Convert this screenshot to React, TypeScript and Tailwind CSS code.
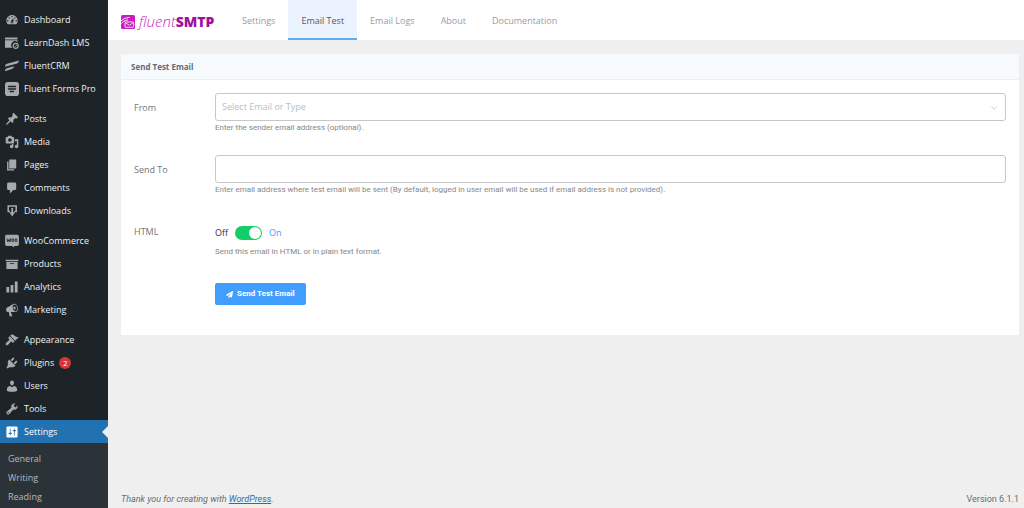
import React, { useState } from "react";
import { FaPaperPlane } from "react-icons/fa";
import { ChevronDown } from "lucide-react";
import clsx from "clsx";

interface MenuItem {
  label: string;
  icon: React.ReactNode;
  badge?: number;
}

const Glyph: React.FC<{ d: string }> = ({ d }) => (
  <svg viewBox="0 0 20 20" className="h-[14px] w-[14px]" fill="currentColor" fillRule="evenodd">
    <path d={d} />
  </svg>
);

const LearnDashIcon = () => (
  <svg viewBox="0 0 14 14" className="h-[14px] w-[14px]" fill="currentColor">
    <path d="M0 1.500h12.500v2H0zM0 4.200h12.500v2a3.600 3.600 0 0 0-5 5.500H0z" />
    <circle cx="10.700" cy="9.800" r="2.500" fill="none" stroke="currentColor" strokeWidth="1.200" />
    <path d="M9.600 9.800l.9.8 1.400-1.600" fill="none" stroke="currentColor" strokeWidth=".8" />
  </svg>
);

const FluentCrmIcon = () => (
  <svg viewBox="0 0 14 14" className="h-[14px] w-[14px]" fill="currentColor">
    <path d="M0 7.800C0 5.700 1 4.900 2.800 4.400L14 1.400C13.600 3.500 12.600 4.300 11 4.800z" />
    <path d="M0 12.200C0 10.300 1 9.500 2.600 9.100L9.200 7.300C8.800 9.100 7.700 9.900 6.200 10.300z" />
  </svg>
);

const FluentFormsIcon = () => (
  <svg viewBox="0 0 14 14" className="h-[14px] w-[14px]">
    <rect width="14" height="14" rx="2.800" fill="currentColor" />
    <path d="M3.600 4.500h6.800M3.600 7h6.800M5.300 9.500h3" stroke="#1d2327" strokeWidth="1.600" strokeLinecap="round" />
  </svg>
);

const DownloadsIcon = () => (
  <svg viewBox="0 0 14 14" className="h-[14px] w-[14px]" fill="none" stroke="currentColor">
    <path d="M5 7.500H3.200V2h8v5.500H9.400" strokeWidth="1.500" />
    <path d="M7.200 4v5" strokeWidth="1.800" />
    <path d="M4.300 8.300h5.800L7.200 12.400z" fill="currentColor" stroke="none" />
  </svg>
);

const WooIcon = () => (
  <svg viewBox="0 0 14 14" className="h-[14px] w-[14px]">
    <path d="M1.800.8h10.400c1 0 1.700.7 1.700 1.700v7.800c0 1-.7 1.700-1.700 1.700H9l.4 1.600L6.800 12h-5C.8 12 .1 11.300.1 10.300V2.500C.1 1.500.8.8 1.800.8z" fill="currentColor" />
    <path d="M2 4.400l.8 3.400L4.100 5.400l1 2.400L5.700 4.400" fill="none" stroke="#1d2327" strokeWidth=".9" />
    <ellipse cx="7.800" cy="6.200" rx="1" ry="1.500" fill="none" stroke="#1d2327" strokeWidth=".9" />
    <ellipse cx="11" cy="6.200" rx="1" ry="1.500" fill="none" stroke="#1d2327" strokeWidth=".9" />
  </svg>
);

const menuGroups: MenuItem[][] = [
  [
    {
      label: "Dashboard",
      icon: (
        <Glyph d="M3.760 16h12.480c1.100-1.370 1.760-3.110 1.760-5 0-4.420-3.580-8-8-8s-8 3.580-8 8c0 1.890.66 3.630 1.760 5zM10 4c.55 0 1 .45 1 1s-.45 1-1 1-1-.45-1-1 .45-1 1-1zM6 6c.55 0 1 .45 1 1s-.45 1-1 1-1-.45-1-1 .45-1 1-1zm8 0c.55 0 1 .45 1 1s-.45 1-1 1-1-.45-1-1 .45-1 1-1zm-5.370 5.550L12 7v6c0 1.100-.9 2-2 2s-2-.9-2-2c0-.57.24-1.080.63-1.450zM4 10c.55 0 1 .45 1 1s-.45 1-1 1-1-.45-1-1 .45-1 1-1zm12 0c.55 0 1 .45 1 1s-.45 1-1 1-1-.45-1-1 .45-1 1-1zm-5 3c0-.55-.45-1-1-1s-1 .45-1 1 .45 1 1 1 1-.45 1-1z" />
      ),
    },
    { label: "LearnDash LMS", icon: <LearnDashIcon /> },
    { label: "FluentCRM", icon: <FluentCrmIcon /> },
    { label: "Fluent Forms Pro", icon: <FluentFormsIcon /> },
  ],
  [
    {
      label: "Posts",
      icon: (
        <Glyph d="M10.440 3.020l1.820-1.820 6.360 6.350-1.830 1.820c-1.050-.68-2.480-.57-3.410.36l-.75.75c-.92.93-1.040 2.350-.35 3.410l-1.830 1.820-2.410-2.410-2.800 2.790c-.42.42-3.380 2.710-3.800 2.290s1.860-3.390 2.280-3.810l2.790-2.790L4.100 9.360l1.830-1.820c1.050.69 2.480.57 3.400-.36l.75-.75c.93-.92 1.050-2.350.36-3.410z" />
      ),
    },
    {
      label: "Media",
      icon: (
        <Glyph d="M13 11V4c0-.55-.45-1-1-1h-1.670L9 1H5L3.670 3H2c-.55 0-1 .45-1 1v7c0 .55.45 1 1 1h10c.55 0 1-.45 1-1zM7 4.500c1.380 0 2.500 1.120 2.500 2.500S8.380 9.500 7 9.500 4.500 8.380 4.500 7 5.620 4.500 7 4.500zM14 6h5v10.500c0 1.380-1.120 2.500-2.500 2.500S14 17.880 14 16.500s1.120-2.500 2.500-2.500c.17 0 .34.02.5.05V9h-3V6zm-4 8.050V13h2v3.500c0 1.380-1.120 2.500-2.500 2.500S7 17.880 7 16.500 8.120 14 9.500 14c.17 0 .34.02.5.05z" />
      ),
    },
    { label: "Pages", icon: <Glyph d="M6 15V2h10v13H6zm-1 1h8v2H3V5h2v11z" /> },
    {
      label: "Comments",
      icon: (
        <Glyph d="M5 2h9c1.100 0 2 .9 2 2v7c0 1.100-.9 2-2 2h-2l-5 5v-5H5c-1.100 0-2-.9-2-2V4c0-1.100.9-2 2-2z" />
      ),
    },
    { label: "Downloads", icon: <DownloadsIcon /> },
  ],
  [
    { label: "WooCommerce", icon: <WooIcon /> },
    { label: "Products", icon: <Glyph d="M19 4v2H1V4h18zM2 7h16v10H2V7zm11 3V9H7v1h6z" /> },
    { label: "Analytics", icon: <Glyph d="M18 18V2h-4v16h4zm-6 0V7H8v11h4zm-6 0v-8H2v8h4z" /> },
    {
      label: "Marketing",
      icon: (
        <Glyph d="M18.150 5.940c.46 1.620.38 3.220-.02 4.480-.42 1.280-1.260 2.180-2.300 2.480-.16.06-.26.06-.4.06-.06.02-.12.02-.18.02-.06.02-.14.02-.22.02h-6.800l2.220 5.500c.02.14-.06.26-.14.34-.08.1-.24.16-.34.16H6.950c-.1 0-.26-.06-.34-.16-.08-.08-.16-.2-.14-.34l-1-5.500H4.250l-.02-.02c-.5.06-1.080-.18-1.540-.62s-.88-1.080-1.060-1.880c-.24-.8-.2-1.560-.02-2.200.18-.62.58-1.080 1.060-1.300l.02-.02 9-5.400c.1-.06.18-.1.24-.16.06-.04.14-.08.24-.12.16-.08.28-.12.5-.18 1.040-.3 2.240.1 3.220.98s1.840 2.240 2.260 3.860zm-2.580 5.980h-.02c.4-.1.74-.34 1.040-.7.58-.7.86-1.760.86-3.040 0-.64-.1-1.300-.28-1.980-.34-1.360-1.020-2.500-1.780-3.240s-1.680-1.100-2.460-.88c-.82.22-1.400.96-1.700 2-.32 1.040-.28 2.360.06 3.720.38 1.360 1 2.500 1.800 3.240.78.74 1.620 1.100 2.480.88zm-2.540-7.080c.22-.04.42-.02.62.04.38.16.76.48 1.020 1s.42 1.200.42 1.780c0 .3-.04.56-.12.8-.18.48-.44.84-.86.94-.34.1-.8-.06-1.140-.4s-.64-.86-.78-1.500c-.18-.62-.12-1.240.02-1.720s.48-.84.82-.94z" />
      ),
    },
  ],
  [
    {
      label: "Appearance",
      icon: (
        <Glyph d="M14.480 11.060L7.410 3.990l1.500-1.500c.5-.56 2.300-.47 3.510.32 1.210.8 1.430 1.280 2.910 2.100 1.180.64 2.450 1.260 4.450.85zm-.71.71L6.700 4.700 4.930 6.470c-.39.39-.39 1.020 0 1.410l1.060 1.060c.39.39.39 1.030 0 1.420-.6.6-1.430 1.110-2.210 1.690-.35.26-.7.53-1.010.84C1.430 14.230.4 16.080 1.400 17.070c.99 1 2.840-.03 4.180-1.360.31-.31.58-.66.85-1.020.57-.78 1.080-1.610 1.690-2.210.39-.39 1.020-.39 1.410 0l1.060 1.060c.39.39 1.020.39 1.410 0z" />
      ),
    },
    {
      label: "Plugins",
      badge: 2,
      icon: (
        <Glyph d="M13.110 4.360L9.870 7.600 8 5.730l3.240-3.240c.35-.34 1.050-.2 1.560.32.52.51.66 1.210.31 1.550zm-8 1.770l.91-1.120 9.010 9.010-1.190.84c-.71.71-2.630 1.160-3.820 1.160H6.140L4.900 17.260c-.59.59-1.540.59-2.120 0-.59-.58-.59-1.530 0-2.120l1.240-1.240v-3.880c0-1.130.4-3.190 1.090-3.890zm7.260 3.970l3.240-3.240c.34-.35 1.040-.21 1.550.31.52.51.66 1.210.31 1.550l-3.240 3.250z" />
      ),
    },
    {
      label: "Users",
      icon: (
        <Glyph d="M10 9.250c-2.270 0-2.730-3.440-2.730-3.440C7 4.020 7.820 2 9.970 2c2.160 0 2.980 2.020 2.710 3.810 0 0-.41 3.440-2.680 3.440zm0 2.570L12.720 10c2.390 0 4.520 2.330 4.520 4.530v2.490s-3.650 1.130-7.240 1.130c-3.650 0-7.240-1.130-7.240-1.130v-2.490c0-2.250 1.940-4.480 4.470-4.480z" />
      ),
    },
    {
      label: "Tools",
      icon: (
        <Glyph d="M16.680 9.770c-1.340 1.340-3.300 1.670-4.950.99l-5.410 6.520c-.99.99-2.590.99-3.580 0s-.99-2.590 0-3.570l6.520-5.420c-.68-1.650-.35-3.610.99-4.950 1.280-1.280 3.120-1.620 4.720-1.060l-2.890 2.890 2.820 2.820 2.860-2.870c.53 1.580.18 3.390-1.080 4.650zM3.810 16.210c.4.39 1.040.39 1.430 0 .4-.4.4-1.040 0-1.430-.39-.4-1.030-.4-1.430 0-.39.39-.39 1.030 0 1.430z" />
      ),
    },
    {
      label: "Settings",
      icon: (
        <Glyph d="M18 16V4c0-1.100-.9-2-2-2H4c-1.100 0-2 .9-2 2v12c0 1.100.9 2 2 2h12c1.100 0 2-.9 2-2zM8 11h1c.55 0 1 .45 1 1s-.45 1-1 1H8v1.500c0 .28-.22.5-.5.5s-.5-.22-.5-.5V13H6c-.55 0-1-.45-1-1s.45-1 1-1h1V5.500c0-.28.22-.5.5-.5s.5.22.5.5V11zm5-2h-1c-.55 0-1-.45-1-1s.45-1 1-1h1V5.500c0-.28.22-.5.5-.5s.5.22.5.5V7h1c.55 0 1 .45 1 1s-.45 1-1 1h-1v5.500c0 .28-.22.5-.5.5s-.5-.22-.5-.5V9z" />
      ),
    },
  ],
];

const submenu = ["General", "Writing", "Reading"];
const tabs = ["Settings", "Email Test", "Email Logs", "About", "Documentation"];

const Sidebar: React.FC = () => (
  <nav className="w-[108px] shrink-0 bg-[#1d2327] pt-2 text-[#f0f0f1]">
    <div className="flex flex-col gap-[7px]">
      {menuGroups.map((group, index) => (
        <ul key={index}>
          {group.map((item) => {
            const active = item.label === "Settings";
            return (
              <li key={item.label}>
                <a
                  href="#"
                  className={clsx(
                    "relative flex h-[23px] items-center gap-[5px] pl-[5px] whitespace-nowrap",
                    active && "bg-[#2271b1] text-white"
                  )}
                >
                  <span className={active ? "text-white" : "text-[#a7aaad]"}>{item.icon}</span>
                  {item.label}
                  {item.badge && (
                    <span className="flex h-3 w-3 items-center justify-center rounded-full bg-[#d63638] text-[8px] text-white">
                      {item.badge}
                    </span>
                  )}
                  {active && (
                    <span className="absolute top-[6px] right-0 border-y-[6px] border-r-[6px] border-y-transparent border-r-[#efefef]" />
                  )}
                </a>
              </li>
            );
          })}
        </ul>
      ))}
    </div>
    <ul className="bg-[#2c3338] pt-[6px] pb-1 text-[#b4b9be]">
      {submenu.map((item) => (
        <li key={item}>
          <a href="#" className="flex h-[19px] items-center pl-2">
            {item}
          </a>
        </li>
      ))}
    </ul>
  </nav>
);

const Logo: React.FC = () => (
  <a href="#" className="flex w-[95px] shrink-0 items-center gap-1 pt-[3px]">
    <svg viewBox="0 0 14 14" className="h-[14px] w-[14px] shrink-0">
      <rect width="14" height="14" rx="1.500" fill="#c71fc0" />
      <path d="M0 6C2 3.800 4.500 3 8.500 2.300M0 8.800C1.500 6.600 3.500 5.600 7 4.900" fill="none" stroke="#fff" strokeWidth=".9" />
      <rect x="4" y="7" width="8.600" height="5.300" rx=".8" fill="none" stroke="#fff" strokeWidth=".8" />
      <path d="M4.300 7.600l4 2.700 4-2.700" fill="none" stroke="#fff" strokeWidth=".8" />
    </svg>
    <span className="flex items-baseline leading-4">
      <span className="text-[15px] font-light text-[#c71fc0] italic">fluent</span>
      <span className="text-[14px] font-extrabold text-[#a3109b]">SMTP</span>
    </span>
  </a>
);

const Field: React.FC<{ id: string; label: string; help: string; children: React.ReactNode }> = ({
  id,
  label,
  help,
  children,
}) => (
  <div className="flex">
    <label htmlFor={id} className="w-[81px] shrink-0 pt-px leading-7 text-[#737679]">
      {label}
    </label>
    <div className="min-w-0 flex-1">
      {children}
      <p className="mt-px font-[Roboto,sans-serif] text-[8px] leading-3 text-[#85888b]">{help}</p>
    </div>
  </div>
);

const App: React.FC = () => {
  const [sendTo, setSendTo] = useState("");
  const [html, setHtml] = useState(true);

  return (
    <div className="flex min-h-screen bg-[#efefef] font-['Open_Sans',sans-serif] text-[9px]">
      <Sidebar />
      <div className="flex min-w-0 flex-1 flex-col">
        {/* Top bar */}
        <header className="flex h-10 items-center bg-white pl-[13px]">
          <Logo />
          <nav className="ml-[13px] flex h-full text-[#999b9e]">
            {tabs.map((tab) => (
              <a
                key={tab}
                href="#"
                className={clsx(
                  "flex items-center border-b-2 px-[13px] pt-[3px]",
                  tab === "Email Test" ? "border-[#5aaef5] bg-[#ebf3fe] text-[#55595e]" : "border-transparent"
                )}
              >
                {tab}
              </a>
            ))}
          </nav>
        </header>

        {/* Test form */}
        <main className="mt-[14px] mr-[5px] ml-[13px] bg-white">
          <h1 className="h-[26px] border-b border-[#ebeef2] bg-[#f6fafd] pl-[10px] text-[8px] leading-[26px] font-bold text-[#626b77]">
            Send Test Email
          </h1>
          <form className="flex flex-col gap-[21px] px-[13px] pt-[13px] pb-[30px]" onSubmit={(e) => e.preventDefault()}>
            <Field id="from" label="From" help="Enter the sender email address (optional).">
              <div className="relative">
                <select
                  id="from"
                  className="block h-7 w-full appearance-none rounded-[3px] border border-[#c5c7ca] bg-white px-[6px] text-[#b9bec6]"
                >
                  <option>Select Email or Type</option>
                </select>
                <ChevronDown className="pointer-events-none absolute top-[10px] right-[7px] h-[10px] w-[10px] text-[#c0c4cc]" />
              </div>
            </Field>
            <Field
              id="send-to"
              label="Send To"
              help="Enter email address where test email will be sent (By default, logged in user email will be used if email address is not provided)."
            >
              <input
                id="send-to"
                type="email"
                value={sendTo}
                onChange={(e) => setSendTo(e.target.value)}
                className="block h-7 w-full rounded-[3px] border border-[#c5c7ca] bg-white px-[6px]"
              />
            </Field>
            <Field id="html" label="HTML" help="Send this email in HTML or in plain text format.">
              <div className="flex h-7 items-center gap-[7px] pt-1">
                <span className="text-[#303133]">Off</span>
                <input
                  id="html"
                  type="checkbox"
                  role="switch"
                  checked={html}
                  onChange={(e) => setHtml(e.target.checked)}
                  className="flex h-[14px] w-[27px] appearance-none items-center rounded-full bg-[#c0c4cc] px-px before:h-3 before:w-3 before:rounded-full before:bg-white before:content-[''] checked:justify-end checked:bg-[#13ce66]"
                />
                <span className="text-[#409eff]">On</span>
              </div>
            </Field>
            <div className="pt-1 pl-[81px]">
              <button
                type="submit"
                className="flex h-[22px] items-center gap-1 rounded-[2px] bg-[#409eff] px-[11px] font-[Roboto,sans-serif] text-[8px] font-bold text-white"
              >
                <FaPaperPlane className="h-[7px] w-[7px]" />
                Send Test Email
              </button>
            </div>
          </form>
        </main>

        <footer className="mt-auto flex items-center justify-between pr-[5px] pb-1 pl-[13px] font-[Roboto,sans-serif] leading-[14px] text-[#6a6d70]">
          <p className="italic">
            Thank you for creating with{" "}
            <a href="#" className="text-[#2271b1] underline">
              WordPress
            </a>
            .
          </p>
          <p>Version 6.1.1</p>
        </footer>
      </div>
    </div>
  );
};

export default App;
